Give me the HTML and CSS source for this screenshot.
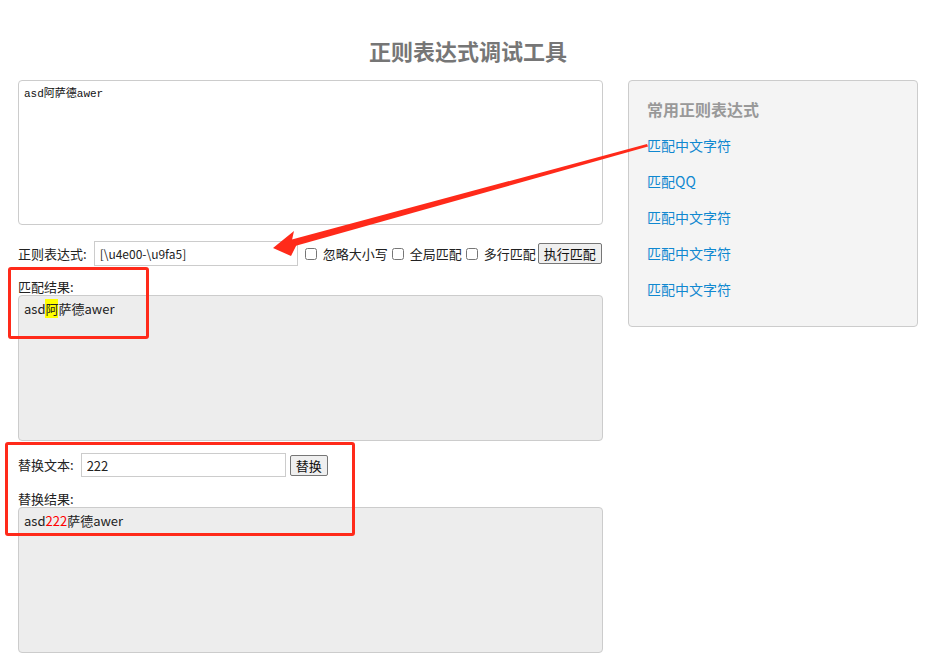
FILE: index.html
```html
<!DOCTYPE html>
<html lang="zh-CN">
<head>
<meta charset="utf-8">
<title>正则表达式调试工具</title>
<link rel="stylesheet" href="styles.css">
</head>
<body>
<div class="page">
  <h1 class="title">正则表达式调试工具</h1>
  <div class="main">
    <div class="left">
      <textarea class="source">asd阿萨德awer</textarea>
      <div class="row regex-row">
        <label class="lbl">正则表达式:</label>
        <input class="txt regex" type="text" value="[\u4e00-\u9fa5]">
        <label class="chk"><input type="checkbox">忽略大小写</label>
        <label class="chk"><input type="checkbox">全局匹配</label>
        <label class="chk"><input type="checkbox">多行匹配</label>
        <button class="btn">执行匹配</button>
      </div>
      <div class="sub-label">匹配结果:</div>
      <div class="result">asd<span class="hl">阿</span>萨德awer</div>
      <div class="row replace-row">
        <label class="lbl">替换文本:</label>
        <input class="txt replace" type="text" value="222">
        <button class="btn">替换</button>
      </div>
      <div class="sub-label">替换结果:</div>
      <div class="result">asd<span class="rep">222</span>萨德awer</div>
    </div>
    <div class="side">
      <h3 class="side-title">常用正则表达式</h3>
      <a class="link" href="#">匹配中文字符</a>
      <a class="link" href="#">匹配QQ</a>
      <a class="link" href="#">匹配中文字符</a>
      <a class="link" href="#">匹配中文字符</a>
      <a class="link" href="#">匹配中文字符</a>
    </div>
  </div>
</div>
<div class="mark mark-1"></div>
<div class="mark mark-2"></div>
<svg class="arrow" width="929" height="662" viewBox="0 0 929 662">
  <polygon fill="#ff2a1a" points="647,144 648,146.5 295,246 290,240"/>
  <polygon fill="#ff2a1a" points="273,248 294,231 292,240 297,244 291,256"/>
</svg>
</body>
</html>
```
FILE: styles.css
```css
html, body {
  margin: 0;
  padding: 0;
  background: #fff;
}
body {
  font-family: "Noto Sans CJK SC", "Microsoft YaHei", sans-serif;
  font-size: 13px;
  color: #222;
  position: relative;
  width: 929px;
  height: 662px;
  overflow: hidden;
}
.page {
  padding-left: 18px;
  width: 900px;
}
.title {
  margin: 0;
  padding-top: 35px;
  height: 45px;
  line-height: 30px;
  text-align: center;
  font-size: 22px;
  font-weight: bold;
  color: #767676;
}
.main {
  display: flex;
  gap: 25px;
  align-items: flex-start;
}
.left {
  width: 585px;
  flex-shrink: 0;
  display: flex;
  flex-direction: column;
}
.source {
  box-sizing: border-box;
  width: 585px;
  height: 145px;
  border: 1px solid #ccc;
  border-radius: 4px;
  padding: 5px 5px;
  margin: 0;
  resize: none;
  font-family: "Liberation Mono", "Noto Sans CJK SC", monospace;
  font-size: 11px;
  line-height: 16px;
  color: #111;
  outline: none;
}
.row {
  display: flex;
  align-items: center;
  height: 25px;
}
.row > * {
  flex-shrink: 0;
}
.regex-row {
  margin-top: 16px;
}
.lbl {
  line-height: 20px;
  margin-right: 7px;
  white-space: nowrap;
}
.txt {
  box-sizing: border-box;
  height: 25px;
  border: 1px solid #ccc;
  padding: 0 5px;
  margin: 0;
  font-family: "Noto Sans CJK SC", sans-serif;
  font-size: 12px;
  color: #222;
  outline: none;
}
.regex {
  width: 204px;
  margin-right: 5px;
}
.chk {
  display: flex;
  align-items: center;
  white-space: nowrap;
  margin-right: 2px;
}
.chk input {
  width: 12px;
  height: 12px;
  margin: 0 6px 0 2px;
}
.btn {
  box-sizing: border-box;
  height: 21px;
  padding: 0 5px;
  margin: 0;
  white-space: nowrap;
  border: 1px solid #767676;
  border-radius: 2px;
  background: #efefef;
  font-family: "Noto Sans CJK SC", sans-serif;
  font-size: 13px;
  line-height: 19px;
  color: #111;
}
.sub-label {
  line-height: 16px;
  margin-top: 13px;
  margin-bottom: 0;
}
.result {
  box-sizing: border-box;
  height: 146px;
  border: 1px solid #ccc;
  border-radius: 4px;
  background: #ededed;
  padding: 3px 5px;
  font-size: 13px;
  line-height: 20px;
  color: #222;
}
.hl {
  background: #ffff00;
}
.rep {
  color: #ff0000;
}
.replace-row {
  margin-top: 12px;
  height: 24px;
}
.replace-row .lbl {
  margin-right: 7px;
}
.replace {
  width: 205px;
  height: 24px;
  font-size: 13px;
  margin-right: 4px;
}
.replace-row .btn {
  margin-left: 0;
}
.replace-row + .sub-label {
  margin-top: 14px;
}
.side {
  box-sizing: border-box;
  width: 290px;
  height: 247px;
  border: 1px solid #ccc;
  border-radius: 4px;
  background: #f4f4f4;
  padding: 16px 18px;
  display: flex;
  flex-direction: column;
}
.side-title {
  margin: 0 0 6px 0;
  font-size: 16px;
  line-height: 24px;
  font-weight: bold;
  color: #999;
}
.link {
  display: block;
  font-size: 14px;
  line-height: 36px;
  height: 36px;
  color: #1088d0;
  text-decoration: none;
}
.mark {
  position: absolute;
  border: 3px solid #ff2a1a;
  border-radius: 3px;
  box-sizing: border-box;
}
.mark-1 {
  left: 8px;
  top: 267px;
  width: 141px;
  height: 72px;
}
.mark-2 {
  left: 5px;
  top: 442px;
  width: 350px;
  height: 94px;
}
.arrow {
  position: absolute;
  left: 0;
  top: 0;
  pointer-events: none;
}
```
